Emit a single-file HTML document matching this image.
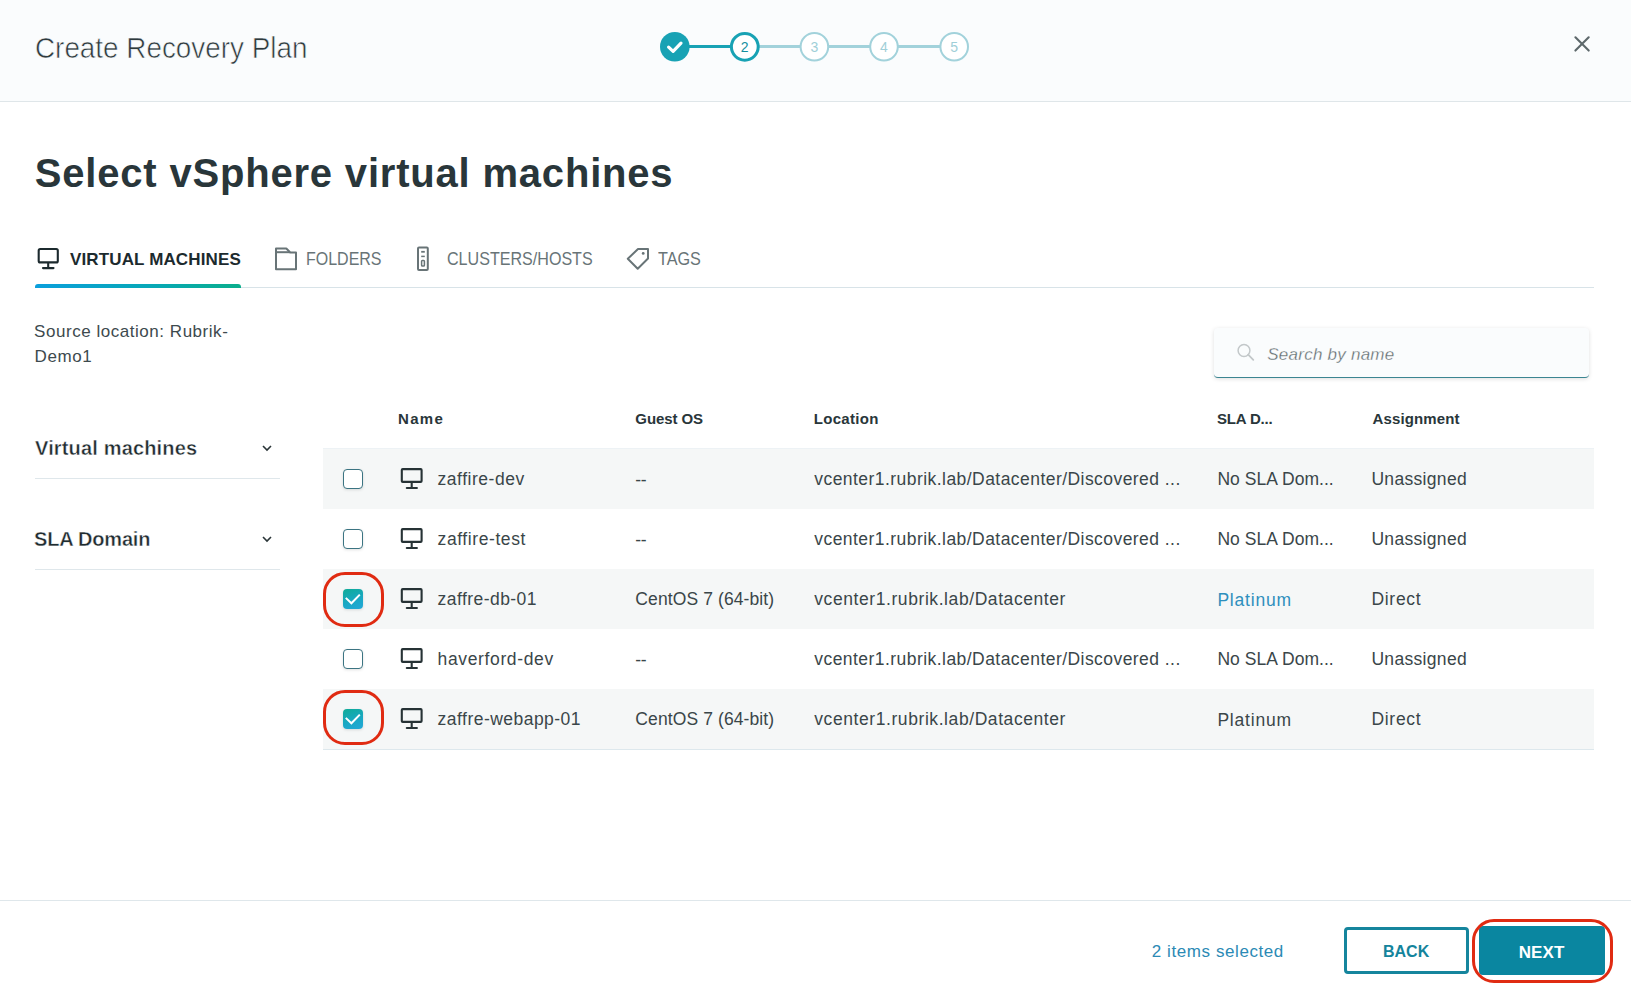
<!DOCTYPE html>
<html><head><meta charset="utf-8"><title>Create Recovery Plan</title>
<style>
html,body{margin:0;padding:0}
body{width:1631px;height:1000px;overflow:hidden;background:#ffffff;position:relative;font-family:"Liberation Sans",sans-serif}
.t{position:absolute;white-space:nowrap;line-height:1;font-family:"Liberation Sans",sans-serif}
.a{position:absolute;box-sizing:border-box}
.row{position:absolute;left:323px;width:1271px;height:60px;background:#f5f7f7}
.cb{position:absolute;left:343px;width:20px;height:20px;box-sizing:border-box;border:1.4px solid #3b7482;border-radius:4px;background:#fff;box-shadow:0 1px 3px rgba(0,0,0,.12)}
.cbc{position:absolute;left:343px;width:20px;height:20px;border-radius:4px;background:linear-gradient(160deg,#0eab96 0%,#1aa8c6 60%,#22a8d8 100%);box-shadow:0 1px 3px rgba(0,0,0,.13)}
.red{position:absolute;box-sizing:border-box;border:3px solid #e02b12;border-radius:22px}
.line{position:absolute;height:1px;background:#dfe7eb}
</style></head><body>
<!-- header -->
<div class="a" style="left:0;top:0;width:1631px;height:102px;background:#fafcfd;border-bottom:1px solid #dfe6e9"></div>
<svg class="a" style="left:0;top:0" width="1631" height="100" viewBox="0 0 1631 100">
 <line x1="689" y1="46.5" x2="731" y2="46.5" stroke="#18a2b4" stroke-width="3"/>
 <line x1="759" y1="46.5" x2="801" y2="46.5" stroke="#a2d2db" stroke-width="3"/>
 <line x1="828" y1="46.5" x2="870" y2="46.5" stroke="#a2d2db" stroke-width="3"/>
 <line x1="898" y1="46.5" x2="940" y2="46.5" stroke="#a2d2db" stroke-width="3"/>
 <circle cx="674.8" cy="46.8" r="14.8" fill="#18a2b4"/>
 <path d="M668.6 47.2 L673.1 51.4 L681 43.2" stroke="#fff" stroke-width="3.2" fill="none" stroke-linecap="round" stroke-linejoin="round"/>
 <circle cx="744.8" cy="46.8" r="13.4" fill="#fff" stroke="#18a2b4" stroke-width="3"/>
 <circle cx="814.4" cy="46.8" r="13.8" fill="#fff" stroke="#a2d2db" stroke-width="2"/>
 <circle cx="884" cy="46.8" r="13.8" fill="#fff" stroke="#a2d2db" stroke-width="2"/>
 <circle cx="954.2" cy="46.8" r="13.8" fill="#fff" stroke="#a2d2db" stroke-width="2"/>
 <text x="744.6" y="52" font-family="Liberation Sans" font-size="14" fill="#168f9f" text-anchor="middle">2</text>
 <text x="814.5" y="52" font-family="Liberation Sans" font-size="14" fill="#9fcfd8" text-anchor="middle">3</text>
 <text x="884" y="52" font-family="Liberation Sans" font-size="14" fill="#9fcfd8" text-anchor="middle">4</text>
 <text x="954.2" y="52" font-family="Liberation Sans" font-size="14" fill="#9fcfd8" text-anchor="middle">5</text>
 <path d="M1575.4 37.3 L1588.7 50.6 M1588.7 37.3 L1575.4 50.6" stroke="#5d686b" stroke-width="2.1" stroke-linecap="round"/>
</svg>
<!-- tabs icons -->
<svg class="a" style="left:0;top:240px" width="720" height="40" viewBox="0 240 720 40">
 <g fill="none" stroke="#1c2a2e" stroke-width="2.1">
  <rect x="38.7" y="249" width="19.1" height="13.4" rx="1.5"/>
  <line x1="48.2" y1="262.5" x2="48.2" y2="267.5"/>
  <line x1="43" y1="268.1" x2="53.5" y2="268.1" stroke-linecap="round"/>
 </g>
 <g fill="none" stroke="#687477" stroke-width="2">
  <path d="M276 248.5 H286.3 L290.3 252.5 H296 V269.2 H276 Z" stroke-linejoin="round"/>
  <line x1="276" y1="252.2" x2="290" y2="252.2"/>
  <rect x="418" y="247.4" width="9.8" height="22.6" rx="1"/>
  <line x1="421.2" y1="251.8" x2="424.8" y2="251.8" stroke-width="1.8"/>
  <line x1="421.2" y1="256.4" x2="424.8" y2="256.4" stroke-width="1.5"/>
  <rect x="421.6" y="260.5" width="2.8" height="5.5" rx="0.8" stroke-width="1.5"/>
  <path d="M638 249 H648 V258.5 L637.7 268.8 L627.8 258.8 Z" stroke-linejoin="round"/>
 </g>
 <circle cx="643.2" cy="253.4" r="1.4" fill="#687477"/>
</svg>
<div class="a" style="left:35px;top:287px;width:1559px;height:1px;background:#d8e3e8"></div>
<div class="a" style="left:35px;top:284px;width:206px;height:4px;border-radius:3px 3px 0 0;background:linear-gradient(90deg,#0b9fdc 0%,#07a8b8 55%,#0aae8c 100%)"></div>
<!-- left filters -->
<div class="line" style="left:35px;top:478px;width:245px"></div>
<div class="line" style="left:35px;top:569px;width:245px"></div>
<svg class="a" style="left:255px;top:435px" width="25" height="115" viewBox="255 435 25 115">
 <path d="M263 446 L267 450 L271 446" fill="none" stroke="#2a3538" stroke-width="1.6"/>
 <path d="M263 537 L267 541 L271 537" fill="none" stroke="#2a3538" stroke-width="1.6"/>
</svg>
<!-- search -->
<div class="a" style="left:1214px;top:328px;width:375px;height:50px;background:#fafcfd;border-radius:4px;border-bottom:1px solid #3b8591;box-shadow:0 1px 4px rgba(0,0,0,.13)"></div>
<svg class="a" style="left:1230px;top:336px" width="30" height="30" viewBox="1230 336 30 30">
 <circle cx="1244" cy="350.5" r="5.9" fill="none" stroke="#c3c8ca" stroke-width="1.5"/>
 <line x1="1248.2" y1="354.7" x2="1253.3" y2="359.8" stroke="#c2c7c9" stroke-width="1.8" stroke-linecap="round"/>
</svg>
<!-- table -->
<div class="a" style="left:323px;top:448px;width:1271px;height:1px;background:#edf2f5"></div>
<div class="row" style="top:449px"></div>
<div class="row" style="top:569px"></div>
<div class="row" style="top:689px"></div>
<div class="a" style="left:323px;top:749px;width:1271px;height:1px;background:#dde8ed"></div>
<div class="cb" style="top:469px"></div>
<div class="cb" style="top:529px"></div>
<div class="cbc" style="top:589px"></div>
<div class="cb" style="top:649px"></div>
<div class="cbc" style="top:709px"></div>
<svg class="a" style="left:340px;top:460px" width="90" height="280" viewBox="340 460 90 280">
 <g fill="none" stroke="#fff" stroke-width="2">
  <path d="M345.8 597.9 L351.4 603.3 L359.8 594.6"/>
  <path d="M345.8 717.9 L351.4 723.3 L359.8 714.6"/>
 </g>
 <g fill="none" stroke="#263235" stroke-width="2.1">
  <rect x="401.8" y="469.1" width="19.8" height="12.8" rx="0.9"/><line x1="411.7" y1="482" x2="411.7" y2="487.5"/><line x1="406.8" y1="488" x2="416.9" y2="488" stroke-linecap="round"/>
  <rect x="401.8" y="529.1" width="19.8" height="12.8" rx="0.9"/><line x1="411.7" y1="542" x2="411.7" y2="547.5"/><line x1="406.8" y1="548" x2="416.9" y2="548" stroke-linecap="round"/>
  <rect x="401.8" y="589.1" width="19.8" height="12.8" rx="0.9"/><line x1="411.7" y1="602" x2="411.7" y2="607.5"/><line x1="406.8" y1="608" x2="416.9" y2="608" stroke-linecap="round"/>
  <rect x="401.8" y="649.1" width="19.8" height="12.8" rx="0.9"/><line x1="411.7" y1="662" x2="411.7" y2="667.5"/><line x1="406.8" y1="668" x2="416.9" y2="668" stroke-linecap="round"/>
  <rect x="401.8" y="709.1" width="19.8" height="12.8" rx="0.9"/><line x1="411.7" y1="722" x2="411.7" y2="727.5"/><line x1="406.8" y1="728" x2="416.9" y2="728" stroke-linecap="round"/>
 </g>
</svg>
<div class="red" style="left:323px;top:572px;width:61px;height:55px"></div>
<div class="red" style="left:323px;top:690px;width:61px;height:55px"></div>
<!-- footer -->
<div class="a" style="left:0;top:900px;width:1631px;height:1px;background:#dfe7eb"></div>
<div class="a" style="left:1344px;top:926.5px;width:124.5px;height:47.5px;border:3px solid #15859d;border-radius:4px;background:#fff"></div>
<div class="a" style="left:1479px;top:926px;width:126px;height:49px;background:#0a86a0;border-radius:4px"></div>
<div class="red" style="left:1471.5px;top:918.5px;width:141.5px;height:64.5px;border-width:3px"></div>
<div class="t" style="left:35.24px;top:34.00px;font-size:29px;font-weight:400;font-style:normal;color:#2e3a3e;transform:scaleX(0.9601);transform-origin:0 0;-webkit-text-stroke:0.6px #fafcfd">Create Recovery Plan</div>
<div class="t" style="left:34.80px;top:153.00px;font-size:40px;font-weight:700;font-style:normal;color:#29363a;letter-spacing:0.807px">Select vSphere virtual machines</div>
<div class="t" style="left:70.00px;top:251.00px;font-size:17px;font-weight:700;font-style:normal;color:#1c2a2e;letter-spacing:0.133px">VIRTUAL MACHINES</div>
<div class="t" style="left:306.09px;top:251.00px;font-size:17.5px;font-weight:400;font-style:normal;color:#687477;transform:scaleX(0.9136);transform-origin:0 0">FOLDERS</div>
<div class="t" style="left:446.78px;top:251.00px;font-size:17.5px;font-weight:400;font-style:normal;color:#687477;transform:scaleX(0.9191);transform-origin:0 0">CLUSTERS/HOSTS</div>
<div class="t" style="left:658.20px;top:251.00px;font-size:17.5px;font-weight:400;font-style:normal;color:#687477;transform:scaleX(0.9261);transform-origin:0 0">TAGS</div>
<div class="t" style="left:34.10px;top:322.60px;font-size:17px;font-weight:400;font-style:normal;color:#3d4a4e;letter-spacing:0.535px">Source location: Rubrik-</div>
<div class="t" style="left:34.50px;top:347.60px;font-size:17px;font-weight:400;font-style:normal;color:#3d4a4e;letter-spacing:0.625px">Demo1</div>
<div class="t" style="left:35.00px;top:438.00px;font-size:20px;font-weight:700;font-style:normal;color:#1f2c30;letter-spacing:0.160px;-webkit-text-stroke:0.4px #fff">Virtual machines</div>
<div class="t" style="left:34.00px;top:529.00px;font-size:20px;font-weight:700;font-style:normal;color:#1f2c30;letter-spacing:-0.189px;-webkit-text-stroke:0.4px #fff">SLA Domain</div>
<div class="t" style="left:1267.30px;top:346.00px;font-size:17px;font-weight:400;font-style:italic;color:#5f6b6e;letter-spacing:0.238px;-webkit-text-stroke:0.3px #fafcfd">Search by name</div>
<div class="t" style="left:398.00px;top:411.00px;font-size:15px;font-weight:700;font-style:normal;color:#29363a;letter-spacing:1.333px">Name</div>
<div class="t" style="left:635.30px;top:411.00px;font-size:15px;font-weight:700;font-style:normal;color:#29363a;letter-spacing:-0.086px">Guest OS</div>
<div class="t" style="left:813.80px;top:411.00px;font-size:15px;font-weight:700;font-style:normal;color:#29363a;letter-spacing:0.300px">Location</div>
<div class="t" style="left:1217.00px;top:411.00px;font-size:15px;font-weight:700;font-style:normal;color:#29363a;letter-spacing:-0.171px">SLA D...</div>
<div class="t" style="left:1372.50px;top:411.00px;font-size:15px;font-weight:700;font-style:normal;color:#29363a;letter-spacing:0.122px">Assignment</div>
<div class="t" style="left:1151.70px;top:943.00px;font-size:17px;font-weight:400;font-style:normal;color:#2b8ab5;letter-spacing:0.587px">2 items selected</div>
<div class="t" style="left:1382.56px;top:943.00px;font-size:17px;font-weight:700;font-style:normal;color:#14849c;transform:scaleX(0.9417);transform-origin:0 0">BACK</div>
<div class="t" style="left:1518.70px;top:944.00px;font-size:17px;font-weight:700;font-style:normal;color:#ffffff;letter-spacing:0.100px">NEXT</div>
<div class="t" style="left:437.60px;top:471.00px;font-size:17.5px;font-weight:400;font-style:normal;color:#3a4649;letter-spacing:0.520px">zaffire-dev</div>
<div class="t" style="left:635.30px;top:471.80px;font-size:17.5px;font-weight:400;font-style:normal;color:#3a4649;letter-spacing:-0.300px">--</div>
<div class="t" style="left:814.30px;top:471.00px;font-size:17.5px;font-weight:400;font-style:normal;color:#3a4649;letter-spacing:0.448px">vcenter1.rubrik.lab/Datacenter/Discovered ...</div>
<div class="t" style="left:1217.40px;top:471.00px;font-size:17.5px;font-weight:400;font-style:normal;color:#3a4649;letter-spacing:0.050px">No SLA Dom...</div>
<div class="t" style="left:1371.40px;top:471.00px;font-size:17.5px;font-weight:400;font-style:normal;color:#3a4649;letter-spacing:0.322px">Unassigned</div>
<div class="t" style="left:437.60px;top:531.00px;font-size:17.5px;font-weight:400;font-style:normal;color:#3a4649;letter-spacing:0.582px">zaffire-test</div>
<div class="t" style="left:635.30px;top:531.80px;font-size:17.5px;font-weight:400;font-style:normal;color:#3a4649;letter-spacing:-0.300px">--</div>
<div class="t" style="left:814.30px;top:531.00px;font-size:17.5px;font-weight:400;font-style:normal;color:#3a4649;letter-spacing:0.448px">vcenter1.rubrik.lab/Datacenter/Discovered ...</div>
<div class="t" style="left:1217.40px;top:531.00px;font-size:17.5px;font-weight:400;font-style:normal;color:#3a4649;letter-spacing:0.050px">No SLA Dom...</div>
<div class="t" style="left:1371.40px;top:531.00px;font-size:17.5px;font-weight:400;font-style:normal;color:#3a4649;letter-spacing:0.322px">Unassigned</div>
<div class="t" style="left:437.60px;top:591.00px;font-size:17.5px;font-weight:400;font-style:normal;color:#3a4649;letter-spacing:0.445px">zaffre-db-01</div>
<div class="t" style="left:635.30px;top:591.00px;font-size:17.5px;font-weight:400;font-style:normal;color:#3a4649;letter-spacing:0.106px">CentOS 7 (64-bit)</div>
<div class="t" style="left:814.30px;top:591.00px;font-size:17.5px;font-weight:400;font-style:normal;color:#3a4649;letter-spacing:0.576px">vcenter1.rubrik.lab/Datacenter</div>
<div class="t" style="left:1217.40px;top:592.00px;font-size:17.5px;font-weight:400;font-style:normal;color:#2e8fbd;letter-spacing:0.800px">Platinum</div>
<div class="t" style="left:1371.40px;top:591.00px;font-size:17.5px;font-weight:400;font-style:normal;color:#3a4649;letter-spacing:0.720px">Direct</div>
<div class="t" style="left:437.60px;top:651.00px;font-size:17.5px;font-weight:400;font-style:normal;color:#3a4649;letter-spacing:0.633px">haverford-dev</div>
<div class="t" style="left:635.30px;top:651.80px;font-size:17.5px;font-weight:400;font-style:normal;color:#3a4649;letter-spacing:-0.300px">--</div>
<div class="t" style="left:814.30px;top:651.00px;font-size:17.5px;font-weight:400;font-style:normal;color:#3a4649;letter-spacing:0.448px">vcenter1.rubrik.lab/Datacenter/Discovered ...</div>
<div class="t" style="left:1217.40px;top:651.00px;font-size:17.5px;font-weight:400;font-style:normal;color:#3a4649;letter-spacing:0.050px">No SLA Dom...</div>
<div class="t" style="left:1371.40px;top:651.00px;font-size:17.5px;font-weight:400;font-style:normal;color:#3a4649;letter-spacing:0.322px">Unassigned</div>
<div class="t" style="left:437.60px;top:711.00px;font-size:17.5px;font-weight:400;font-style:normal;color:#3a4649;letter-spacing:0.473px">zaffre-webapp-01</div>
<div class="t" style="left:635.30px;top:711.00px;font-size:17.5px;font-weight:400;font-style:normal;color:#3a4649;letter-spacing:0.106px">CentOS 7 (64-bit)</div>
<div class="t" style="left:814.30px;top:711.00px;font-size:17.5px;font-weight:400;font-style:normal;color:#3a4649;letter-spacing:0.576px">vcenter1.rubrik.lab/Datacenter</div>
<div class="t" style="left:1217.40px;top:712.00px;font-size:17.5px;font-weight:400;font-style:normal;color:#3a4649;letter-spacing:0.800px">Platinum</div>
<div class="t" style="left:1371.40px;top:711.00px;font-size:17.5px;font-weight:400;font-style:normal;color:#3a4649;letter-spacing:0.720px">Direct</div>
</body></html>
